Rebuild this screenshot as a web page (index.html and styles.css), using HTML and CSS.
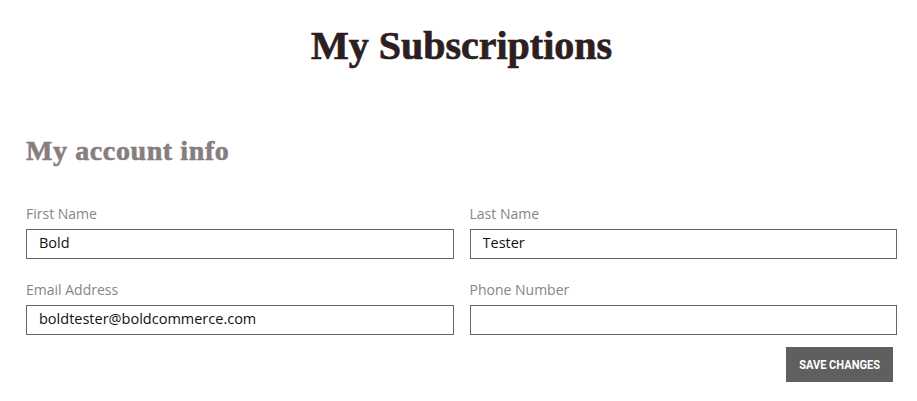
FILE: index.html
```html
<!DOCTYPE html>
<html lang="en">
<head>
<meta charset="utf-8">
<title>My Subscriptions</title>
<link rel="stylesheet" href="styles.css">
</head>
<body>
<main class="page">
  <h1 class="page-title">My Subscriptions</h1>
  <section class="account">
    <h2 class="section-title">My account info</h2>
    <form class="account-form">
      <div class="fields">
        <label class="field">
          <span class="field-label">First Name</span>
          <input class="field-input" type="text" value="Bold">
        </label>
        <label class="field">
          <span class="field-label">Last Name</span>
          <input class="field-input" type="text" value="Tester">
        </label>
        <label class="field">
          <span class="field-label">Email Address</span>
          <input class="field-input" type="text" value="boldtester@boldcommerce.com">
        </label>
        <label class="field">
          <span class="field-label">Phone Number</span>
          <input class="field-input" type="text" value="">
        </label>
      </div>
      <div class="actions">
        <button class="save-btn" type="button"><span class="save-btn-text">SAVE CHANGES</span></button>
      </div>
    </form>
  </section>
</main>
</body>
</html>
```
FILE: styles.css
```css
* { box-sizing: border-box; }
html, body { margin: 0; padding: 0; background: #ffffff; }
.page {
  padding: 0 20px 0 26px;
}
.page-title {
  margin: 22px 0 0;
  font-family: "Liberation Serif", serif;
  font-weight: 700;
  font-size: 40px;
  line-height: 48px;
  text-align: center;
  color: #2d1f21;
  -webkit-text-stroke: 0.7px #2d1f21;
}
.section-title {
  margin: 63px 0 0;
  font-family: "Liberation Serif", serif;
  font-weight: 700;
  font-size: 28px;
  line-height: 36px;
  letter-spacing: 0.6px;
  color: #877d7e;
  -webkit-text-stroke: 0.6px #877d7e;
}
.account-form { margin: 35px 0 0; }
.fields {
  display: grid;
  grid-template-columns: 1fr 1fr;
  column-gap: 16px;
  row-gap: 21px;
}
.field { display: flex; flex-direction: column; }
.field-label {
  font-family: "Open Sans", sans-serif;
  font-size: 14px;
  line-height: 20px;
  height: 20px;
  margin-bottom: 5px;
  color: #8b8384;
}
.field-input {
  display: block;
  width: 100%;
  height: 30px;
  margin: 0;
  padding: 0 12px 3px;
  border: 1px solid #666666;
  border-radius: 0;
  background: #ffffff;
  font-family: "Open Sans", sans-serif;
  font-size: 14.5px;
  color: #111111;
  outline: none;
}
.actions {
  display: flex;
  justify-content: flex-end;
  margin-top: 12px;
  padding-right: 4px;
}
.save-btn {
  display: flex;
  align-items: center;
  justify-content: center;
  width: 107px;
  height: 35px;
  margin: 0;
  padding: 0;
  border: none;
  border-radius: 0;
  background: #5f5f5f;
  color: #ffffff;
  cursor: pointer;
}
.save-btn-text {
  display: inline-block;
  font-family: "Roboto", sans-serif;
  font-weight: 700;
  font-size: 13px;
  line-height: 16px;
  white-space: nowrap;
  transform: scaleX(0.85);
}
```
